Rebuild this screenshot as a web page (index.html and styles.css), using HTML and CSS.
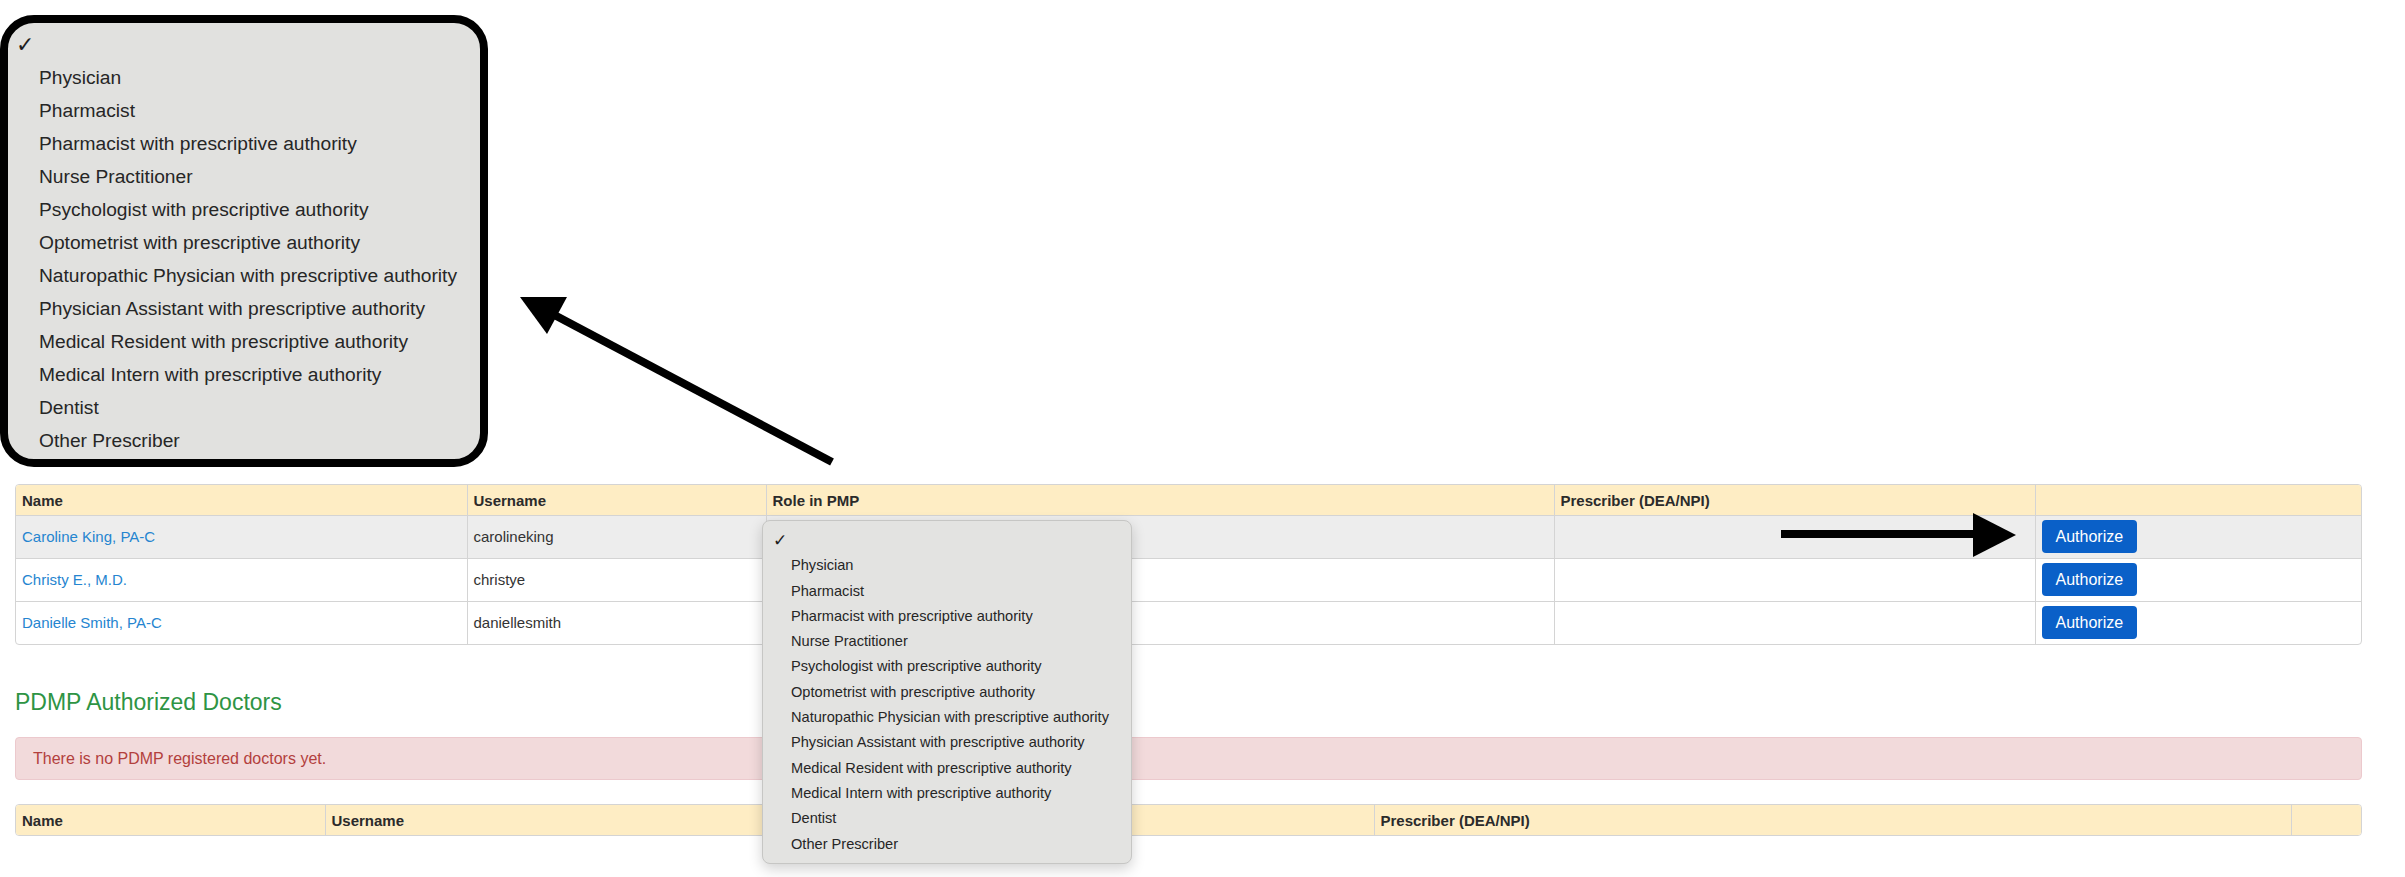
FILE: index.html
```html
<!DOCTYPE html>
<html lang="en">
  <head>
    <meta charset="UTF-8" />
    <meta name="viewport" content="width=device-width, initial-scale=1.0" />
    <link rel="stylesheet" href="styles.css">
    <title>PDMP Doctors</title>
  </head>
  <body>
    <div class="page">
      <!-- enlarged copy of the role menu, used as a callout -->
      <div class="callout">
        <ul class="menu-list big">
          <li class="checked">✓</li>
          <li>Physician</li>
          <li>Pharmacist</li>
          <li>Pharmacist with prescriptive authority</li>
          <li>Nurse Practitioner</li>
          <li>Psychologist with prescriptive authority</li>
          <li>Optometrist with prescriptive authority</li>
          <li>Naturopathic Physician with prescriptive authority</li>
          <li>Physician Assistant with prescriptive authority</li>
          <li>Medical Resident with prescriptive authority</li>
          <li>Medical Intern with prescriptive authority</li>
          <li>Dentist</li>
          <li>Other Prescriber</li>
        </ul>
      </div>

      <div class="content">
        <div class="table-wrap">
          <table class="doctors">
            <colgroup>
              <col style="width: 451px">
              <col style="width: 299px">
              <col style="width: 788px">
              <col style="width: 481px">
              <col>
            </colgroup>
            <thead>
              <tr>
                <th>Name</th>
                <th>Username</th>
                <th>Role in PMP</th>
                <th>Prescriber (DEA/NPI)</th>
                <th></th>
              </tr>
            </thead>
            <tbody>
              <tr class="active">
                <td><a href="#">Caroline King, PA-C</a></td>
                <td>carolineking</td>
                <td></td>
                <td></td>
                <td><button class="btn">Authorize</button></td>
              </tr>
              <tr>
                <td><a href="#">Christy E., M.D.</a></td>
                <td>christye</td>
                <td></td>
                <td></td>
                <td><button class="btn">Authorize</button></td>
              </tr>
              <tr>
                <td><a href="#">Danielle Smith, PA-C</a></td>
                <td>daniellesmith</td>
                <td></td>
                <td></td>
                <td><button class="btn">Authorize</button></td>
              </tr>
            </tbody>
          </table>
        </div>

        <h4 class="section-title">PDMP Authorized Doctors</h4>

        <div class="alert">There is no PDMP registered doctors yet.</div>

        <div class="table-wrap">
          <table class="doctors">
            <colgroup>
              <col style="width: 309px">
              <col style="width: 526px">
              <col style="width: 523px">
              <col style="width: 917px">
              <col>
            </colgroup>
            <thead>
              <tr>
                <th>Name</th>
                <th>Username</th>
                <th>Role in PMP</th>
                <th>Prescriber (DEA/NPI)</th>
                <th></th>
              </tr>
            </thead>
          </table>
        </div>
      </div>

      <!-- open select menu for the first row -->
      <ul class="menu-list role-menu">
        <li class="checked">✓</li>
        <li>Physician</li>
        <li>Pharmacist</li>
        <li>Pharmacist with prescriptive authority</li>
        <li>Nurse Practitioner</li>
        <li>Psychologist with prescriptive authority</li>
        <li>Optometrist with prescriptive authority</li>
        <li>Naturopathic Physician with prescriptive authority</li>
        <li>Physician Assistant with prescriptive authority</li>
        <li>Medical Resident with prescriptive authority</li>
        <li>Medical Intern with prescriptive authority</li>
        <li>Dentist</li>
        <li>Other Prescriber</li>
      </ul>

      <svg class="arrows" width="2405" height="877" viewBox="0 0 2405 877">
        <line x1="832" y1="462" x2="545" y2="310" stroke="#000" stroke-width="8" />
        <polygon points="520,297 567,297 547,334" fill="#000" />
        <line x1="1781" y1="534" x2="1980" y2="534" stroke="#000" stroke-width="8" />
        <polygon points="2016,535 1973,513 1973,557" fill="#000" />
      </svg>
    </div>
  </body>
</html>
```

FILE: styles.css
```css
body {
  margin: 0;
  background-color: #fff;
  font-family: "Liberation Sans", Arial, sans-serif;
  color: #333;
}

.page {
  position: relative;
  width: 2405px;
  height: 877px;
  overflow: hidden;
}

/* menus */
.menu-list {
  list-style: none;
  margin: 0;
  color: #262626;
}

.menu-list li {
  white-space: nowrap;
}

.menu-list li.checked {
  font-family: "DejaVu Sans", sans-serif;
  color: #1e1e1e;
}

.callout {
  box-sizing: border-box;
  width: 488px;
  height: 452px;
  margin-top: 15px;
  border: 8px solid #000;
  border-radius: 34px;
  background-color: #e1e1df;
  overflow: hidden;
}

.menu-list.big {
  padding: 5px 0 2px 31px;
  font-size: 19.2px;
}

.menu-list.big li {
  height: 33px;
  line-height: 33px;
}

.menu-list.big li.checked {
  margin-left: -23px;
  font-size: 22px;
}

.role-menu {
  position: absolute;
  left: 762px;
  top: 520px;
  box-sizing: border-box;
  width: 370px;
  padding: 7px 0 6px 28px;
  background-color: #e3e3e1;
  border: 1px solid #c6c6c4;
  border-radius: 8px;
  box-shadow: 0 5px 14px rgba(0, 0, 0, 0.18);
  font-size: 14.6px;
}

.role-menu li {
  height: 25.3px;
  line-height: 25.3px;
}

.role-menu li.checked {
  margin-left: -18px;
  font-size: 17px;
}

/* page content */
.content {
  padding: 17px 43px 0 15px;
}

.table-wrap {
  border: 1px solid #d4d4d4;
  border-radius: 4px;
  overflow: hidden;
}

.doctors {
  width: 100%;
  table-layout: fixed;
  border-collapse: collapse;
  font-size: 15px;
}

.doctors th {
  height: 30px;
  padding: 0 6px;
  background-color: #feedc4;
  border-left: 1px solid #d4d4d4;
  text-align: left;
  font-weight: bold;
  color: #2b2b2b;
}

.doctors td {
  height: 33px;
  padding: 4px 6px 5px;
  border-top: 1px solid #d4d4d4;
  border-left: 1px solid #d4d4d4;
  vertical-align: middle;
  color: #333;
}

.doctors th:first-child,
.doctors td:first-child {
  border-left: none;
}

.doctors tr.active td {
  background-color: #ededed;
}

.doctors a {
  color: #2585d0;
  text-decoration: none;
}

.btn {
  display: block;
  height: 33px;
  padding: 0 14px;
  border: none;
  border-radius: 4px;
  background-color: #0a60c8;
  color: white;
  font-family: "Liberation Sans", Arial, sans-serif;
  font-size: 16px;
  cursor: pointer;
}

.section-title {
  margin: 44px 0 22px;
  font-size: 23px;
  line-height: 26px;
  font-weight: normal;
  color: #2e9444;
}

.alert {
  margin-bottom: 24px;
  padding: 12px 17px;
  line-height: 17px;
  font-size: 16px;
  background-color: #f2dadb;
  border: 1px solid #ecc9cd;
  border-radius: 4px;
  color: #b3403d;
}

.arrows {
  position: absolute;
  left: 0;
  top: 0;
  pointer-events: none;
}
```
